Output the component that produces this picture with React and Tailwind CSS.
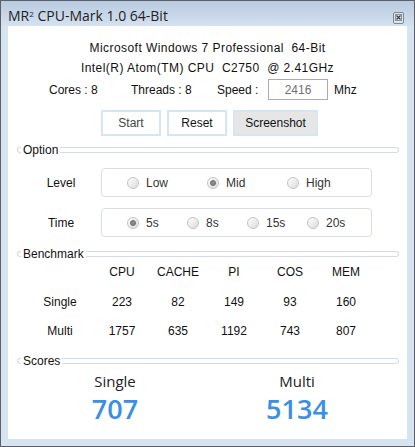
import React from 'react';

// Group caption: a thin rounded rail with the title cut into its left end
function GroupHeader({ title }) {
  return (
    <div className="flex items-center h-[12px] pl-[9px] pr-[8px]">
      <div className="w-[4px] h-[6px] border border-r-0 border-[#d3dbe6] rounded-l-full" />
      <span className="px-[2px] leading-none">{title}</span>
      <div className="flex-1 h-[6px] border border-l-0 border-[#d3dbe6] rounded-r-full" />
    </div>
  );
}

function Radio({ label, checked }) {
  return (
    <div className="flex items-center gap-[7px]">
      <div className="w-[12px] h-[12px] rounded-full border border-[#c4c4c4] bg-gradient-to-br from-[#fdfdfd] to-[#dcdcdc] flex items-center justify-center">
        {checked && <div className="w-[6px] h-[6px] rounded-full bg-[#8a8a8a] border border-[#6e6e6e]" />}
      </div>
      <span className="text-[#333]">{label}</span>
    </div>
  );
}

function OptionRow({ label, items, checked, spacing }) {
  return (
    <div className="flex items-center">
      <div className="w-[93px] pl-[13px] text-center">{label}</div>
      <div className="w-[271px] h-[29px] border border-[#d8dee6] rounded-[4px] flex items-center pl-[25px]">
        {items.map((it) => (
          <div key={it} className={spacing}>
            <Radio label={it} checked={it === checked} />
          </div>
        ))}
      </div>
    </div>
  );
}

const cols = ['CPU', 'CACHE', 'PI', 'COS', 'MEM'];
const rows = [
  ['Single', [223, 82, 149, 93, 160]],
  ['Multi', [1757, 635, 1192, 743, 807]],
];

export default function App() {
  return (
    <div
      className="w-[415px] h-[447px] border border-[#59606a] bg-[#d8e3f0] flex flex-col text-[12px] text-[#111]"
      style={{ fontFamily: '"Liberation Sans", Arial, sans-serif' }}
    >
      {/* title bar */}
      <div className="h-[25px] flex items-center justify-between pl-[7px] pr-[10px] bg-gradient-to-b from-[#b9cbe0] to-[#d4e1ef]">
        <span className="text-[14px] text-[#1e1e1e] pt-[3px]" style={{ fontFamily: '"Open Sans", sans-serif' }}>
          MR<sup className="text-[8px]">2</sup> CPU-Mark 1.0 64-Bit
        </span>
        <div className="mt-[8px] w-[11px] h-[12px] rounded-[2px] border border-[#7d8794] bg-[#dce5ef] flex items-center justify-center">
          <svg width="7" height="7" viewBox="0 0 7 7">
            <rect x="0.5" y="0.5" width="6" height="6" fill="none" stroke="#8a929c" />
            <path d="M1.5 1.5 L5.5 5.5 M5.5 1.5 L1.5 5.5" stroke="#3a3f46" strokeWidth="1.2" />
          </svg>
        </div>
      </div>

      {/* client area */}
      <div className="flex-1 mx-[7px] mb-[7px] bg-white flex flex-col">
        <div className="pt-[12px] flex flex-col items-center tracking-[0.45px]">
          <div className="h-[20px] flex items-center">Microsoft Windows 7 Professional&nbsp; 64-Bit</div>
          <div className="h-[20px] flex items-center">Intel(R) Atom(TM) CPU&nbsp; C2750&nbsp; @ 2.41GHz</div>
        </div>
        <div className="mt-[1px] h-[21px] flex items-center pl-[41px]">
          <span className="w-[82px]">Cores : 8</span>
          <span className="w-[86px]">Threads : 8</span>
          <span className="w-[51px]">Speed :</span>
          <div className="w-[60px] h-[21px] border border-[#ababab] flex items-center justify-center text-[#707070]">2416</div>
          <span className="ml-[6px]">Mhz</span>
        </div>

        <div className="mt-[10px] flex gap-[6px] pl-[93px]">
          <button className="w-[60px] h-[26px] border-2 border-[#d6e4f3] bg-white text-[#444]">Start</button>
          <button className="w-[60px] h-[26px] border-2 border-[#d6e4f3] bg-white">Reset</button>
          <button className="w-[85px] h-[26px] border-2 border-[#d6e4f3] bg-[#e6e6e6]">Screenshot</button>
        </div>

        <div className="mt-[8px]">
          <GroupHeader title="Option" />
        </div>
        <div className="mt-[12px]">
          <OptionRow label="Level" items={['Low', 'Mid', 'High']} checked="Mid" spacing="w-[80px]" />
        </div>
        <div className="mt-[11px]">
          <OptionRow label="Time" items={['5s', '8s', '15s', '20s']} checked="5s" spacing="w-[60px]" />
        </div>

        <div className="mt-[11px]">
          <GroupHeader title="Benchmark" />
        </div>
        <div className="pl-[24px] mt-[1px]">
          <div className="flex h-[22px] items-center">
            <div className="w-[62px]" />
            {cols.map((c) => (
              <div key={c} className="w-[56px] text-center">{c}</div>
            ))}
          </div>
          <div className="mt-[4px]">
            {rows.map(([label, vals]) => (
              <div key={label} className="flex h-[29px] items-center">
                <div className="w-[56px] mr-[6px] text-center">{label}</div>
                {vals.map((v, i) => (
                  <div key={i} className="w-[56px] text-center">{v}</div>
                ))}
              </div>
            ))}
          </div>
        </div>

        <div className="mt-[10px]">
          <GroupHeader title="Scores" />
        </div>
        <div className="flex pl-[32px] gap-[32px] mt-[3px]" style={{ fontFamily: '"Open Sans", sans-serif' }}>
          {[['Single', 707], ['Multi', 5134]].map(([k, v]) => (
            <div key={k} className="w-[150px] flex flex-col items-center">
              <span className="text-[15px] leading-[22px] text-[#222]">{k}</span>
              <span className="text-[27px] leading-[34px] font-semibold text-[#3b8fe4]">{v}</span>
            </div>
          ))}
        </div>
      </div>
    </div>
  );
}
